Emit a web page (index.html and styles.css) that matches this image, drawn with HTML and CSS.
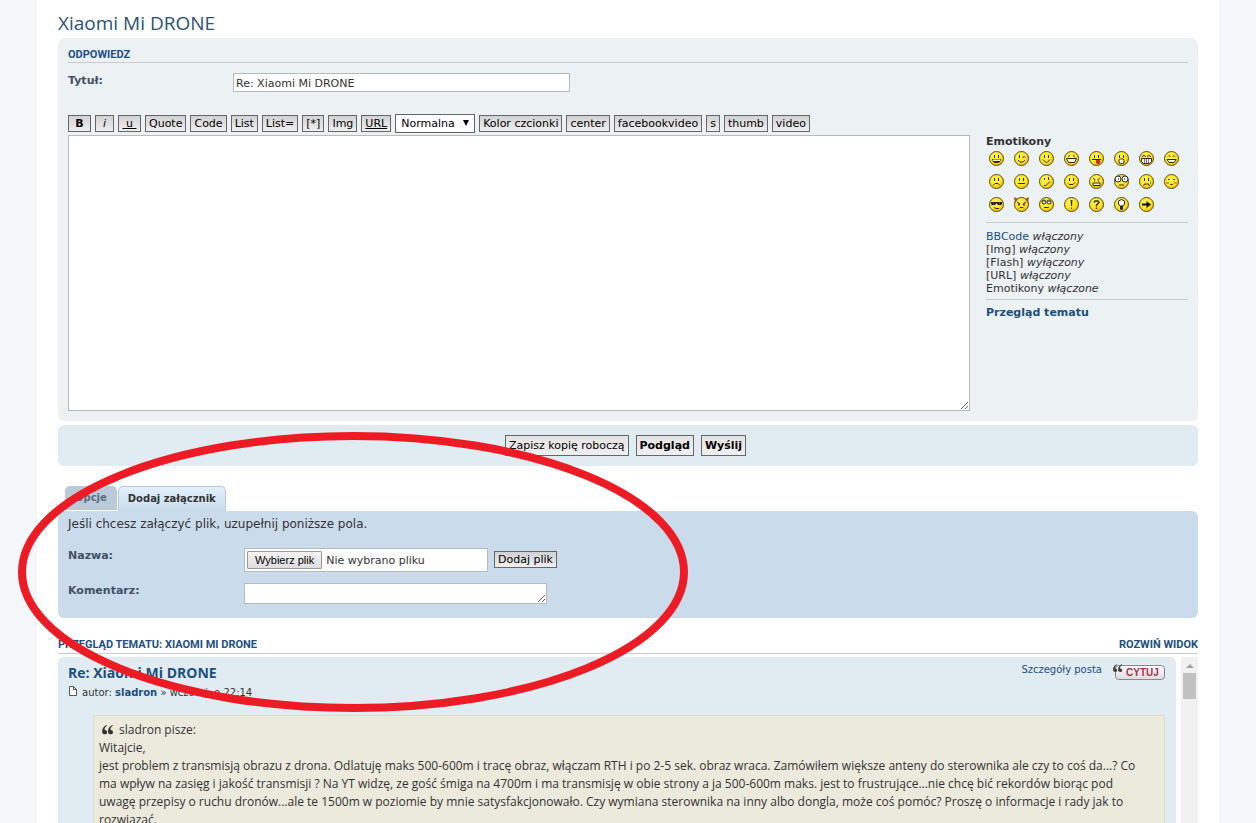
FILE: index.html
```
<!DOCTYPE html>
<html lang="pl">
<head>
<meta charset="utf-8">
<title>Xiaomi Mi DRONE</title>
<link rel="stylesheet" href="styles.css">
</head>
<body>
<svg class="defs" aria-hidden="true">
  <defs>
    <radialGradient id="face" cx="40%" cy="35%" r="75%">
      <stop offset="0" stop-color="#fff75a"/><stop offset="0.6" stop-color="#ffe31a"/><stop offset="1" stop-color="#dca613"/>
    </radialGradient>
    <symbol id="base" viewBox="0 0 15 15"><circle cx="7.5" cy="7.5" r="7" fill="url(#face)" stroke="#5f4d14"/></symbol>
    <symbol id="eyes" viewBox="0 0 15 15"><path d="M5 4h1v3H5zM9 4h1v3H9z" fill="#3a2a00"/></symbol>
  </defs>
</svg>
<main class="wrap">
  <h1 class="topic-title"><a href="#">Xiaomi Mi DRONE</a></h1>

  <form class="posting">
    <section class="panel">
      <h2 class="caption">Odpowiedz</h2>
      <div class="field">
        <label class="label" for="subject">Tytuł:</label>
        <input class="inputbox subject" id="subject" type="text" value="Re: Xiaomi Mi DRONE">
      </div>
      <div class="toolbar">
        <button type="button" class="btn bold wide">B</button>
        <button type="button" class="btn italic mid">i</button>
        <button type="button" class="btn underline wide">&nbsp;u&nbsp;</button>
        <button type="button" class="btn">Quote</button>
        <button type="button" class="btn">Code</button>
        <button type="button" class="btn">List</button>
        <button type="button" class="btn">List=</button>
        <button type="button" class="btn">[*]</button>
        <button type="button" class="btn">Img</button>
        <button type="button" class="btn underline">URL</button>
        <span class="select-wrap"><select class="size" aria-label="Rozmiar czcionki"><option>Normalna</option></select></span>
        <button type="button" class="btn">Kolor czcionki</button>
        <button type="button" class="btn">center</button>
        <button type="button" class="btn">facebookvideo</button>
        <button type="button" class="btn">s</button>
        <button type="button" class="btn">thumb</button>
        <button type="button" class="btn">video</button>
      </div>
      <div class="editor">
        <textarea class="inputbox message" aria-label="Treść wiadomości"></textarea>
        <aside class="side">
          <strong class="side-title">Emotikony</strong>
          <div class="smilies">
            <svg class="smiley"><use href="#base"/><use href="#eyes"/><path d="M3 8h9l-1 3-2 1H6l-2-1z" fill="#3a2000"/><path d="M4 8.500h7v1.500H4z" fill="#fff"/></svg>
            <svg class="smiley"><use href="#base"/><path d="M5 4h1v3H5z" fill="#3a2a00"/><path d="M8.500 6.500l2-1 1 1M4 9l2 2h3l2-2" fill="none" stroke="#3a2a00"/></svg>
            <svg class="smiley"><use href="#base"/><use href="#eyes"/><path d="M4 8.500l3 3h1l3-3" fill="none" stroke="#3a2a00"/></svg>
            <svg class="smiley"><use href="#base"/><path d="M4 5.500l2-1M9 4.500l2 1" stroke="#3a2a00"/><path d="M2.500 7.500h10l-2 4h-6z" fill="#fff" stroke="#3a2000"/></svg>
            <svg class="smiley"><use href="#base"/><use href="#eyes"/><path d="M3 8.500h9" stroke="#3a2000"/><path d="M7 9h4v3l-1 1H8l-1-1z" fill="#d12b1f"/></svg>
            <svg class="smiley"><use href="#base"/><use href="#eyes"/><rect x="5" y="8" width="5" height="4.500" rx="1.500" fill="#fff" stroke="#3a2000"/></svg>
            <svg class="smiley"><use href="#base"/><path d="M3 5.500l2-1 2 1M8 5.500l2-1 2 1" fill="none" stroke="#3a2a00"/><path d="M2.500 7.500h10v3l-2 2h-6l-2-2z" fill="#fff" stroke="#3a2000"/><path d="M5.500 8v4M7.500 8v4M9.500 8v4" stroke="#777"/></svg>
            <svg class="smiley"><use href="#base"/><path d="M4 5.500l1-1 1.500 1M8.500 5.500l1.500-1 1 1" fill="none" stroke="#3a2a00"/><path d="M3 8.500h9l-2 3H5z" fill="#fff" stroke="#3a2a00"/></svg>
            <svg class="smiley"><use href="#base"/><use href="#eyes"/><path d="M4 11.500l2-2h3l2 2" fill="none" stroke="#3a2a00"/></svg>
            <svg class="smiley"><use href="#base"/><use href="#eyes"/><path d="M4 9.500h7" stroke="#3a2a00"/></svg>
            <svg class="smiley"><use href="#base"/><path d="M5 4h1v2H5zM9 3h1v3H9z" fill="#3a2a00"/><path d="M5 11.500h2l4-4" fill="none" stroke="#3a2a00"/></svg>
            <svg class="smiley"><use href="#base"/><use href="#eyes"/><path d="M4 9.500l1 1h4l2-2" fill="none" stroke="#3a2a00"/></svg>
            <svg class="smiley"><use href="#base"/><path d="M4 4l2.500 2M11 4L8.500 6M5 7h1M9 7h1" stroke="#3a2a00"/><path d="M4 9h7v2.500H4z" fill="#fff" stroke="#3a2000"/></svg>
            <svg class="smiley"><use href="#base"/><circle cx="4" cy="5" r="3" fill="#fff" stroke="#222"/><circle cx="11" cy="5" r="3" fill="#fff" stroke="#222"/><path d="M4 4.500h1v1H4zM10 4.500h1v1h-1z"/><path d="M5 11h5" stroke="#3a2a00"/></svg>
            <svg class="smiley"><use href="#base"/><use href="#eyes"/><path d="M4.500 12l1-2h4l1 2" fill="none" stroke="#3a2a00"/><path d="M11 7h1v3h-1z" fill="#5b9bd8"/></svg>
            <svg class="smiley"><use href="#base"/><path d="M4 5.500h2M9 5.500h2M6 10.500h3" stroke="#5a4300"/><path d="M2 8h3v2H2zM10 8h3v2h-3z" fill="#f29a2e"/></svg>
            <svg class="smiley"><use href="#base"/><path d="M2 5h11v2l-1 1H9L7.500 6 6 8H3L2 7z" fill="#1c1a12"/><path d="M4 6h1M10 6h1" stroke="#999"/><path d="M5 10.500l2 1h3" fill="none" stroke="#3a2a00"/></svg>
            <svg class="smiley"><use href="#base"/><path d="M0 0l4 2-3 4zM15 0l-4 2 3 4z" fill="#a35418"/><path d="M3 5l3 2M12 5L9 7" stroke="#3a1000"/><path d="M4 6.500h2v2H4zM9 6.500h2v2H9z" fill="#9b1c10"/><path d="M5 11.500l1-1h3l1 1" fill="none" stroke="#3a2a00"/></svg>
            <svg class="smiley"><use href="#base"/><circle cx="5" cy="5" r="2" fill="#fff" stroke="#222"/><circle cx="10" cy="5" r="2" fill="#fff" stroke="#222"/><path d="M4.500 4h1v1h-1zM9.500 4h1v1h-1z"/><path d="M5 10.500h5" stroke="#3a2a00"/></svg>
            <svg class="smiley"><use href="#base"/><path d="M6.500 3h2L8 9H7zM7 10.500h1v1.500H7z" fill="#3a3000"/></svg>
            <svg class="smiley"><use href="#base"/><path d="M5 5.500L6 4h3l1 1.500-2.500 2.500v1.500M7.500 10.500V12" fill="none" stroke="#3a3000" stroke-width="1.500"/></svg>
            <svg class="smiley"><use href="#base"/><path d="M7.500 2.500L10.500 4v3L9 9H6L4.500 7V4z" fill="#fff" stroke="#222"/><path d="M6 9h3v3l-1 1H7l-1-1z" fill="#222"/></svg>
            <svg class="smiley"><use href="#base"/><path d="M3 6.500h4.500V4L12 7.500 7.500 11V8.500H3z" fill="#111"/></svg>
          </div>
          <hr class="rule">
          <p class="status"><a href="#">BBCode</a> <em>włączony</em><br>[Img] <em>włączony</em><br>[Flash] <em>wyłączony</em><br>[URL] <em>włączony</em><br>Emotikony <em>włączone</em></p>
          <hr class="rule">
          <a class="review-link" href="#review">Przegląd tematu</a>
        </aside>
      </div>
    </section>

    <section class="panel submit">
      <button type="button" class="btn big">Zapisz kopię roboczą</button>
      <button type="button" class="btn big bold">Podgląd</button>
      <button type="submit" class="btn big bold">Wyślij</button>
    </section>

    <nav class="tabs">
      <a class="tab" href="#">Opcje</a>
      <a class="tab active" href="#">Dodaj załącznik</a>
    </nav>
    <section class="panel attach">
      <p class="hint">Jeśli chcesz załączyć plik, uzupełnij poniższe pola.</p>
      <div class="row">
        <label class="label" for="file">Nazwa:</label>
        <span class="inputbox filebox"><button type="button" class="choose" id="file">Wybierz plik</button>Nie wybrano pliku</span>
        <button type="button" class="btn add">Dodaj plik</button>
      </div>
      <div class="row">
        <label class="label" for="comment">Komentarz:</label>
        <textarea class="inputbox comment" id="comment"></textarea>
      </div>
    </section>
  </form>

  <header class="review-head" id="review">
    <h2 class="review-title">Przegląd tematu: Xiaomi Mi DRONE</h2>
    <a href="#">Rozwiń widok</a>
  </header>
  <div class="review">
    <article class="post">
      <div class="post-head">
        <div>
          <h3 class="post-title"><a href="#">Re: Xiaomi Mi DRONE</a></h3>
          <p class="author"><svg class="page" viewBox="0 0 8 10"><path d="M.5.5h4l3 3v6h-7zM4.500.5v3h3" fill="#fff" stroke="#555"/></svg>autor: <a href="#">sladron</a> » wczoraj, o 22:14</p>
        </div>
        <div class="post-links">
          <a class="details" href="#">Szczegóły posta</a>
          <a class="quote-btn" href="#"><svg class="marks" viewBox="0 0 14 12"><path d="M5.500 0C2 1 0 4 0 8c0 3 5 4 6 1 0-2-1-3-3-3 0-3 1-4 3-5zM12.500 0C9 1 7 4 7 8c0 3 5 4 6 1 0-2-1-3-3-3 0-3 1-4 3-5z" fill="#444"/></svg>CYTUJ</a>
        </div>
      </div>
      <blockquote class="quote">
        <cite class="cite"><svg class="cite-marks" viewBox="0 0 14 12"><path d="M5.500 0C2 1 0 4 0 8c0 4 6 4 6 1 0-2-1-3-3-3 0-3 1-4 3-5zM12.500 0C9 1 7 4 7 8c0 4 6 4 6 1 0-2-1-3-3-3 0-3 1-4 3-5z" fill="#333"/></svg>sladron pisze:</cite>
        Witajcie,<br>
        jest problem z transmisją obrazu z drona. Odlatuję maks 500-600m i tracę obraz, włączam RTH i po 2-5 sek. obraz wraca. Zamówiłem większe anteny do sterownika ale czy to coś da...? Co<br>
        ma wpływ na zasięg i jakość transmisji ? Na YT widzę, ze gość śmiga na 4700m i ma transmisję w obie strony a ja 500-600m maks. jest to frustrujące...nie chcę bić rekordów biorąc pod<br>
        uwagę przepisy o ruchu dronów...ale te 1500m w poziomie by mnie satysfakcjonowało. Czy wymiana sterownika na inny albo dongla, może coś pomóc? Proszę o informacje i rady jak to<br>
        rozwiązać.
      </blockquote>
    </article>
    <div class="scrollbar"><span class="arrow"></span><span class="thumb"></span></div>
  </div>
</main>
<svg class="marker" viewBox="0 0 670 280" aria-hidden="true"><ellipse cx="335" cy="140" rx="331" ry="136" fill="none" stroke="#ed1c24" stroke-width="8"/></svg>
</body>
</html>
```
FILE: styles.css
```
* { box-sizing: border-box; }
body {
  margin: 0;
  height: 100vh;
  overflow: hidden;
  background: #f5f7fa;
  color: #333;
  font: 11px/13px Verdana, "DejaVu Sans", sans-serif;
}
a { color: #1a5080; text-decoration: none; }
h1, h2, h3, p { margin: 0; }
.defs { position: absolute; width: 0; height: 0; }
.wrap {
  margin: 0 37px;
  padding: 10px 21px 0;
  min-height: 100vh;
  background: #fff;
}
.topic-title {
  height: 28px;
  font: 19px/26px "Trebuchet MS", "Open Sans", sans-serif;
}
.topic-title a { color: #28527a; }
.panel {
  padding: 10px;
  border-radius: 6px;
  background: #ecf1f3;
}
.caption {
  height: 15px;
  border-bottom: 1px solid #ccc;
  color: #1c4f88;
  font: bold 11px/13px Roboto, Arial, sans-serif;
  text-transform: uppercase;
}
.field { display: flex; padding-top: 10px; height: 50px; }
.label { width: 165px; padding-top: 1px; color: #425067; font-weight: bold; }
.inputbox {
  border: 1px solid #b4bac0;
  border-radius: 0;
  background: #fff;
  color: #333;
  font: inherit;
  outline: none;
}
.subject { width: 337px; height: 19px; padding: 1px 2px 0; }
.toolbar { display: flex; align-items: center; gap: 4px; height: 20px; }
.btn {
  height: 17px;
  padding: 1px 3px 0;
  border: 1px solid #666;
  border-radius: 0;
  background: linear-gradient(#d2d2d2, #efefef);
  color: #000;
  font: 11px/14px Verdana, "DejaVu Sans", sans-serif;
  white-space: nowrap;
}
.bold { font-weight: bold; }
.italic { font-style: italic; }
.underline { text-decoration: underline; }
.wide { width: 23px; }
.mid { width: 19px; }
.select-wrap { position: relative; width: 80px; height: 19px; }
.select-wrap::after {
  content: "";
  position: absolute;
  right: 6px;
  top: 6px;
  border: 3px solid transparent;
  border-top: 6px solid #000;
  border-bottom: 0;
}
.size {
  width: 100%;
  height: 100%;
  padding: 0 5px;
  border: 1px solid #666;
  border-radius: 0;
  background: #fff;
  color: #000;
  font: inherit;
  appearance: none;
}
.editor { display: flex; gap: 16px; padding-top: 2px; }
.message { flex: 1; height: 276px; display: block; }
.side { width: 202px; }
.side-title { display: block; color: #333; }
.smilies {
  display: grid;
  grid-template-columns: repeat(8, 25px);
  grid-auto-rows: 23px;
  padding: 3px 0 0 3px;
}
.smiley { width: 15px; height: 15px; overflow: visible; }
.rule { margin: 2px 0 6px; border: 0; border-top: 1px solid #ccc; }
.status { padding: 1px 0 2px; }
.review-link { font-weight: bold; }
.submit {
  display: flex;
  justify-content: center;
  gap: 7px;
  margin-top: 4px;
  padding-right: 15px;
  background: #e1ebf2;
}
.big { height: 21px; background: linear-gradient(#e4e4e4, #efefef); }
.tabs { display: flex; align-items: flex-end; gap: 1px; margin-top: 20px; padding-left: 7px; }
.tab {
  height: 24px;
  padding: 5px 10px;
  border-radius: 5px 5px 0 0;
  background: #bacad8;
  color: #606b85;
  font-weight: bold;
  font-size: 10px;
}
.tab:not(.active) { margin-bottom: 1px; }
.active {
  height: 25px;
  padding: 5px 9px;
  border: 1px solid #b9c9d9;
  border-bottom: 0;
  background: linear-gradient(#e1f0fc, #cadceb);
  color: #333;
}
.attach { padding: 4px 10px 14px; background: #cadceb; }
.hint { height: 33px; font-size: 12px; line-height: 18px; }
.row { display: flex; align-items: flex-start; min-height: 24px; margin-bottom: 11px; }
.row .label { width: 176px; }
.row:last-child { min-height: 21px; margin-bottom: 0; }
.filebox { width: 244px; height: 24px; padding: 2px; display: flex; align-items: center; gap: 4px; }
.choose {
  height: 18px;
  padding: 0 7px;
  border: 1px solid #999;
  border-radius: 1px;
  background: linear-gradient(#f4f4f4, #ddd);
  color: #000;
  font: 11px/14px "Liberation Sans", Arial, sans-serif;
}
.add { margin: 3px 0 0 6px; }
.comment { width: 303px; height: 21px; }
.review-head {
  display: flex;
  justify-content: space-between;
  margin-top: 20px;
  height: 16px;
  border-bottom: 1px solid #ccc;
  color: #1c4f88;
  font: bold 11px/14px Roboto, Arial, sans-serif;
  text-transform: uppercase;
}
.review-title { font: inherit; }
.review { display: flex; gap: 5px; margin-top: 3px; }
.post { flex: 1; padding: 6px 11px 10px 10px; border-radius: 6px; background: #e1ebf2; }
.post-head { display: flex; justify-content: space-between; height: 52px; }
.post-title { font: bold 14px/20px "Trebuchet MS", "Open Sans", sans-serif; }
.author { margin-top: 3px; font-size: 10px; }
.author a { font-weight: bold; }
.page { width: 8px; height: 10px; margin: 0 5px 0 1px; }
.post-links { display: flex; align-items: flex-start; gap: 13px; font-size: 10px; }
.quote-btn {
  position: relative;
  width: 50px;
  height: 15px;
  margin-top: 2px;
  padding-left: 5px;
  border: 1px solid #888;
  border-radius: 4px;
  background: linear-gradient(#fff, #ddd);
  color: #b52a4c;
  font: bold 10px/14px "Liberation Sans", Arial, sans-serif;
  text-align: center;
}
.marks { position: absolute; left: -3px; top: -2px; width: 10px; height: 9px; }
.quote {
  margin: 0 0 0 25px;
  padding: 5px;
  border: 1px solid #dbdbce;
  background: #ebeadd;
  font: 12px/18px "Trebuchet MS", "Open Sans", sans-serif;
  white-space: nowrap;
}
.cite { display: block; font-style: normal; }
.cite-marks { width: 14px; height: 10px; margin: 0 4px 0 2px; vertical-align: -1px; }
.scrollbar { width: 17px; padding: 7px 2px; background: #f1f1f1; }
.arrow {
  display: block;
  width: 0;
  margin: 0 auto 5px;
  border: 4px solid transparent;
  border-top: 0;
  border-bottom-color: #a3a3a3;
}
.thumb { display: block; height: 26px; background: #c1c1c1; }
.marker {
  position: absolute;
  left: 18px;
  top: 432px;
  width: 670px;
  height: 280px;
  pointer-events: none;
}
```
